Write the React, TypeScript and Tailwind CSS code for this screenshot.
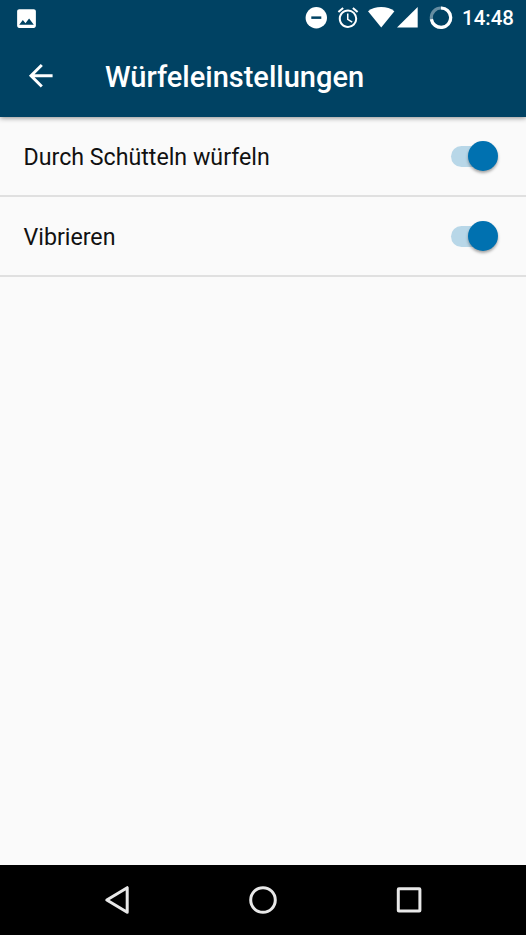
import React from "react";

function StatusBar() {
  return (
    <div className="flex h-9 items-center justify-between">
      <svg className="ml-[14px] h-[25px] w-[25px]" viewBox="0 0 24 24" fill="#fff">
        <path d="M21 19V5c0-1.100-.9-2-2-2H5c-1.100 0-2 .9-2 2v14c0 1.100.9 2 2 2h14c1.100 0 2-.9 2-2zM8.500 13.500l2.500 3.010L14.500 12l4.500 6H5l3.500-4.500z" />
      </svg>
      <div className="flex h-9 items-center">
        <svg className="h-9 w-[154px]" viewBox="300 0 154 36" fill="#fff">
          <circle cx="316.300" cy="17.700" r="10.700" />
          <rect x="311.300" y="16.400" width="10" height="2.500" fill="#004263" />
          <g transform="translate(335.700 5.400) scale(1.025)">
            <path d="M22 5.720l-4.600-3.860-1.290 1.530 4.600 3.860L22 5.720zM7.880 3.390L6.600 1.860 2 5.710l1.290 1.530 4.590-3.850zM12.500 8H11v6l4.750 2.850.75-1.230-4-2.370V8zM12 4c-4.970 0-9 4.030-9 9s4.020 9 9 9a9 9 0 0 0 0-18zm0 16c-3.870 0-7-3.130-7-7s3.130-7 7-7 7 3.130 7 7-3.130 7-7 7z" />
          </g>
          <path d="M381.200 27.500L368 11.200Q373.500 7 381.200 7T394.400 11.200Z" />
          <path d="M397 27.500L417.700 7V27.500Z" />
          <circle cx="441" cy="17.700" r="9.700" fill="none" stroke="#fff" strokeOpacity=".4" strokeWidth="3.200" />
          <path d="M441 8A9.700 9.700 0 1 1 431.400 19.200" fill="none" stroke="#fff" strokeWidth="3.200" />
        </svg>
        <span className="ml-[8px] w-[64px] text-[20.500px] leading-9 font-medium text-white">14:48</span>
      </div>
    </div>
  );
}

function SettingRow({ label }: { label: string }) {
  return (
    <div className="flex h-20 items-center justify-between border-b-2 border-[#e0e0e0] pr-7 pl-[23.500px]">
      <span className="pt-0.5 text-[23.200px] leading-8 text-[#111]">{label}</span>
      <div className="flex items-center">
        <div className="-mr-[23px] h-[21px] w-10 rounded-full bg-[#b8d7e8]" />
        <div className="z-10 h-[30px] w-[30px] rounded-full bg-[#0071b0] shadow-[0_2px_3px_rgba(0,0,0,0.35)]" />
      </div>
    </div>
  );
}

export default function App() {
  return (
    <div className="flex h-[935px] w-[526px] flex-col overflow-hidden bg-[#fafafa] font-['Roboto',sans-serif]">
      <header className="z-10 h-[117px] shrink-0 bg-[#004263] shadow-[0_1px_5px_rgba(0,0,0,0.45)]">
        <StatusBar />
        <div className="flex h-20 items-center">
          <svg className="ml-[23px] h-[35.500px] w-[35.500px]" viewBox="0 0 24 24" fill="#fff">
            <path d="M20 11H7.830l5.590-5.590L12 4l-8 8 8 8 1.410-1.410L7.830 13H20v-2z" />
          </svg>
          <h1 className="ml-[46.500px] pt-0.5 text-[29px] leading-9 font-medium text-white">Würfeleinstellungen</h1>
        </div>
      </header>
      <main className="flex-1">
        <SettingRow label="Durch Schütteln würfeln" />
        <SettingRow label="Vibrieren" />
      </main>
      <nav className="h-[70px] shrink-0 bg-black">
        <svg className="h-[70px] w-full" viewBox="0 865 526 70" fill="none" stroke="#e8e8e8" strokeWidth="3" strokeLinejoin="round">
          <path d="M106.800 900L127.200 887.700V912.300Z" />
          <circle cx="263" cy="900" r="12.300" />
          <rect x="398.300" y="888.800" width="21.600" height="22.200" rx=".6" />
        </svg>
      </nav>
    </div>
  );
}
